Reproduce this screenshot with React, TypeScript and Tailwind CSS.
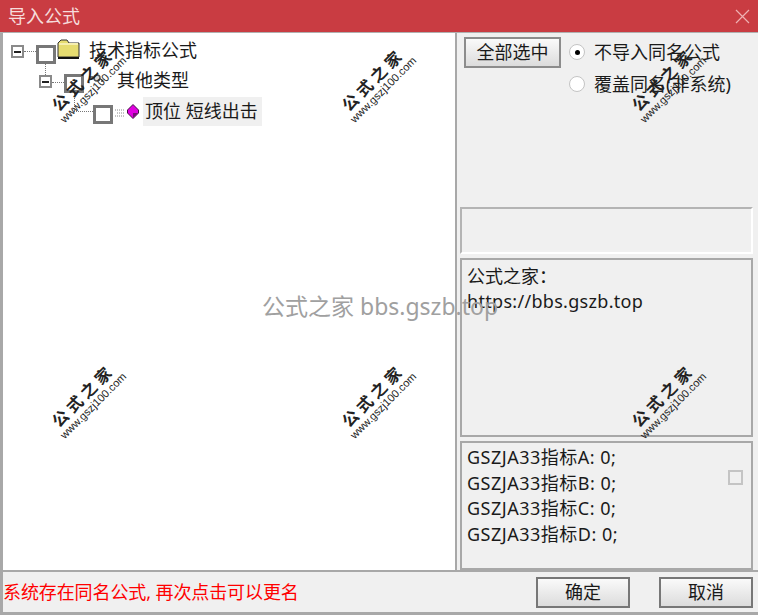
const uiFont = { fontFamily: '"Noto Sans", "Noto Sans CJK SC", sans-serif' };

const marks = [
  { left: 'left-[32px]', top: 'top-[68px]' },
  { left: 'left-[322px]', top: 'top-[68px]' },
  { left: 'left-[612px]', top: 'top-[68px]' },
  { left: 'left-[32px]', top: 'top-[384px]' },
  { left: 'left-[322px]', top: 'top-[384px]' },
  { left: 'left-[612px]', top: 'top-[384px]' },
];

const indicators = ['A', 'B', 'C', 'D'];

function Watermark({ left, top }: { left: string; top: string }) {
  return (
    <div className={`absolute ${left} ${top} w-[110px] -rotate-45 text-center text-[#222] pointer-events-none whitespace-nowrap`}>
      <div className="font-['Noto_Sans_CJK_SC'] font-bold text-[16px] leading-[18px] tracking-[4px]">公式之家</div>
      <div className="font-['Liberation_Sans'] text-[11px] leading-[13px]">www.gszj100.com</div>
    </div>
  );
}

function TreeBox({ className }: { className: string }) {
  return <span className={`absolute w-[20px] h-[19px] border-[3px] border-[#777] bg-white ${className}`} />;
}

function Expander({ className }: { className: string }) {
  return (
    <span className={`absolute w-[13px] h-[13px] border-2 border-[#8a8a8a] bg-white flex items-center justify-center ${className}`}>
      <span className="w-[7px] h-[2px] bg-[#222]" />
    </span>
  );
}

function Tree() {
  return (
    <div className="relative flex-1 bg-white border-r-[2px] border-[#a8a8a8] text-[18px] text-[#1a1a1a]">
      <span className="absolute left-[21px] top-[18px] w-[12px] border-t border-dotted border-[#777]" />
      <span className="absolute left-[42px] top-[30px] h-[12px] border-l border-dotted border-[#777]" />
      <span className="absolute left-[49px] top-[49px] w-[12px] border-t border-dotted border-[#777]" />
      <span className="absolute left-[71px] top-[60px] h-[18px] border-l border-dotted border-[#777]" />
      <span className="absolute left-[71px] top-[78px] w-[19px] border-t border-dotted border-[#777]" />
      <Expander className="left-[8px] top-[12px]" />
      <TreeBox className="left-[33px] top-[12px]" />
      <svg className="absolute left-[54px] top-[6px]" width="23" height="20" viewBox="0 0 23 20">
        <path d="M1 18 V4 L4 1 H10 L12 4 H22 V18 Z" fill="#e6dc70" stroke="#333" strokeWidth="1" />
        <path d="M1 19 H22" stroke="#111" strokeWidth="2" />
        <path d="M2 5 H21" stroke="#f6efb0" strokeWidth="2" />
      </svg>
      <span className="absolute left-[86px] top-[4px] leading-[26px] whitespace-nowrap">技术指标公式</span>
      <Expander className="left-[36px] top-[42px]" />
      <TreeBox className="left-[61px] top-[41px]" />
      <svg className="absolute left-[85px] top-[41px]" width="16" height="10" viewBox="0 0 16 10">
        <circle cx="9" cy="4" r="3" fill="#ddd" stroke="#555" strokeWidth="1.5" />
        <path d="M1 3 H5 M13 7 H15" stroke="#444" strokeWidth="1.5" />
      </svg>
      <span className="absolute left-[114px] top-[34px] leading-[26px] whitespace-nowrap">其他类型</span>
      <TreeBox className="left-[90px] top-[72px]" />
      <svg className="absolute left-[112px] top-[76px]" width="10" height="9" viewBox="0 0 10 9">
        <path d="M0 1 H10 M2 4 H10 M0 7 H10" stroke="#888" strokeWidth="1" strokeDasharray="1 1" />
      </svg>
      <svg className="absolute left-[124px] top-[71px]" width="12" height="15" viewBox="0 0 12 15">
        <path d="M6 0.5 L11.5 6 V9 L6 14.5 L0.5 9 V6 Z" fill="#e000e0" stroke="#401040" strokeWidth="1" />
        <path d="M6 9 L11 9 L6 14 Z" fill="#7a0a7a" />
      </svg>
      <span className="absolute left-[140px] top-[64px] h-[29px] w-[119px] bg-[#f0f0f0] pl-[2px] leading-[29px] whitespace-nowrap">顶位 短线出击</span>
    </div>
  );
}

function SidePanel() {
  return (
    <div className="flex flex-col w-[301px] pl-[3px] pr-[5px] text-[#1a1a1a] text-[18px]">
      <div className="h-[174px] flex gap-[8px] pl-[4px] pt-[4px]">
        <button className="w-[97px] h-[31px] shrink-0 border-2 border-[#8c8c8c] bg-gradient-to-b from-[#fafafa] to-[#dcdcdc] whitespace-nowrap">全部选中</button>
        <div className="flex flex-col gap-[8px] pt-[3px] leading-[24px] whitespace-nowrap">
          <label className="flex items-center gap-[9px]">
            <span className="w-[16px] h-[16px] rounded-full bg-white border border-[#c4c4c4] flex items-center justify-center">
              <span className="w-[5px] h-[5px] rounded-full bg-black" />
            </span>
            不导入同名公式
          </label>
          <label className="flex items-center gap-[9px]">
            <span className="w-[16px] h-[16px] rounded-full bg-white border border-[#c4c4c4]" />
            覆盖同名(非系统)
          </label>
        </div>
      </div>
      <div className="h-[47px] border-2 border-[#b4b4b4] border-r-white border-b-white mb-[4px]" />
      <div className="h-[179px] border-2 border-[#a8a8a8] pl-[5px] pt-[4px] leading-[25px] mb-[4px]">
        <div>公式之家：</div>
        <div className="tracking-[0.3px]">https://bbs.gszb.top</div>
      </div>
      <div className="relative h-[129px] border-2 border-[#a8a8a8] pl-[5px] pt-[2px] leading-[25.5px] tracking-[0.5px]">
        {indicators.map((name) => (
          <div key={name} className="whitespace-nowrap">GSZJA33指标{name}: 0;</div>
        ))}
        <span className="absolute right-[8px] top-[27px] w-[15px] h-[15px] border-2 border-[#c4c4c4]" />
      </div>
    </div>
  );
}

export default function App() {
  return (
    <div className="relative w-[758px] h-[615px] overflow-hidden bg-[#f0f0f0] flex flex-col" style={uiFont}>
      <div className="h-[33px] border-b border-[#b0b0b0] bg-[#c93c42] flex items-center justify-between pl-[8px] pr-[8px] text-[18px] text-[#f6dcdc]">
        <span>导入公式</span>
        <svg width="15" height="15" viewBox="0 0 15 15" className="text-[#eeb0b2]">
          <path d="M1 1 L14 14 M14 1 L1 14" stroke="currentColor" strokeWidth="1.2" />
        </svg>
      </div>
      <div className="flex-1 flex flex-col border-l-[3px] border-b-[3px] border-[#a8a8a8] min-h-0">
        <div className="flex h-[539px] border-b-[2px] border-[#a8a8a8]">
          <Tree />
          <SidePanel />
        </div>
        <div className="flex-1 flex items-center justify-between pr-[5px]">
          <span className="text-[18px] text-[#ff0000] whitespace-nowrap -tracking-[0.1px]">系统存在同名公式, 再次点击可以更名</span>
          <div className="flex gap-[29px]">
            <button className="w-[94px] h-[31px] border-2 border-[#777] bg-gradient-to-b from-[#fafafa] to-[#dcdcdc] text-[18px] text-[#1a1a1a]">确定</button>
            <button className="w-[94px] h-[31px] border-2 border-[#777] bg-gradient-to-b from-[#fafafa] to-[#dcdcdc] text-[18px] text-[#1a1a1a]">取消</button>
          </div>
        </div>
      </div>
      {marks.map((m) => (
        <Watermark key={m.left + m.top} left={m.left} top={m.top} />
      ))}
      <div className="absolute left-[262px] top-[290px] text-[23px] leading-[32px] text-[#a0a0a0] whitespace-nowrap pointer-events-none">
        公式之家 bbs.gszb.top
      </div>
    </div>
  );
}
